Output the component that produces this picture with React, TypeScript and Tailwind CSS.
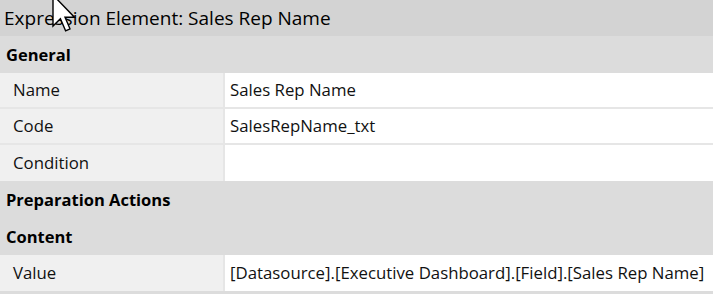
// Panel de propiedades de un elemento de expresión (estilo inspector de escritorio).

const fuente = { fontFamily: '"Open Sans", "Noto Sans", sans-serif' };

type Fila = { etiqueta: string; valor?: string };

function Encabezado({ texto }: { texto: string }) {
  return (
    <div className="flex h-[37px] items-center bg-[#dcdcdc] px-[6px] pt-[2px] text-[16.5px] font-bold text-black">
      {texto}
    </div>
  );
}

function Filas({ filas }: { filas: Fila[] }) {
  return (
    <div className="flex flex-col">
      {filas.map((f, i) => (
        <div
          key={f.etiqueta}
          className={
            "flex h-[36px] " + (i < filas.length - 1 ? "border-b-2 border-[#e6e6e6]" : "")
          }
        >
          <div className="flex w-[225px] shrink-0 items-center border-r-2 border-[#e6e6e6] bg-[#f0f0f0] pl-[13px] text-[16.8px] text-[#111]">
            {f.etiqueta}
          </div>
          <div className="flex flex-1 items-center bg-white pl-[5px] text-[16.8px] text-[#111]">
            {f.valor}
          </div>
        </div>
      ))}
    </div>
  );
}

function Cursor() {
  return (
    <svg
      className="pointer-events-none absolute left-[52px] top-[-6px]"
      width="24"
      height="38"
      viewBox="0 0 12 19"
    >
      <path
        d="M0.5 0.5 L0.5 16 L4.2 12.4 L6.8 18.4 L9 17.4 L6.5 11.6 L11.2 11.6 Z"
        fill="white"
        stroke="black"
        strokeWidth="0.7"
        strokeLinejoin="miter"
      />
    </svg>
  );
}

export default function App() {
  return (
    <div className="relative h-[294px] w-[713px] overflow-hidden bg-[#dcdcdc]" style={fuente}>
      <div className="flex h-[36px] items-center bg-[#d3d3d3] px-[4px] text-[19px] text-black">
        Expression Element: Sales Rep Name
      </div>
      <Encabezado texto="General" />
      <Filas
        filas={[
          { etiqueta: "Name", valor: "Sales Rep Name" },
          { etiqueta: "Code", valor: "SalesRepName_txt" },
          { etiqueta: "Condition" },
        ]}
      />
      <Encabezado texto="Preparation Actions" />
      <Encabezado texto="Content" />
      <Filas
        filas={[
          {
            etiqueta: "Value",
            valor: "[Datasource].[Executive Dashboard].[Field].[Sales Rep Name]",
          },
        ]}
      />
      <Cursor />
    </div>
  );
}
